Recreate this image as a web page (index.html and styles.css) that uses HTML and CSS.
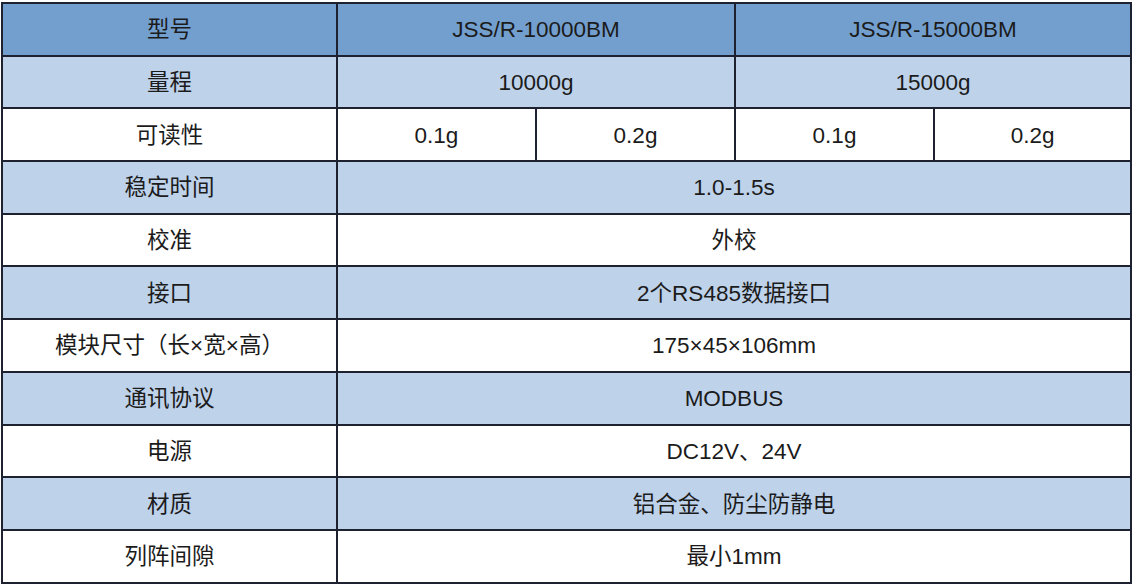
FILE: index.html
```html
<!DOCTYPE html>
<html lang="zh-CN">
<head>
<meta charset="utf-8">
<title>规格参数</title>
<link rel="stylesheet" href="styles.css">
</head>
<body>
<table class="spec">
  <colgroup>
    <col class="c-label">
    <col class="c-val">
    <col class="c-val">
    <col class="c-val">
    <col class="c-last">
  </colgroup>
  <tr class="head">
    <td>型号</td>
    <td colspan="2">JSS/R-10000BM</td>
    <td colspan="2">JSS/R-15000BM</td>
  </tr>
  <tr class="alt">
    <td>量程</td>
    <td colspan="2">10000g</td>
    <td colspan="2">15000g</td>
  </tr>
  <tr>
    <td>可读性</td>
    <td>0.1g</td>
    <td>0.2g</td>
    <td>0.1g</td>
    <td>0.2g</td>
  </tr>
  <tr class="alt">
    <td>稳定时间</td>
    <td colspan="4">1.0-1.5s</td>
  </tr>
  <tr>
    <td>校准</td>
    <td colspan="4">外校</td>
  </tr>
  <tr class="alt">
    <td>接口</td>
    <td colspan="4">2个RS485数据接口</td>
  </tr>
  <tr>
    <td>模块尺寸（长×宽×高）</td>
    <td colspan="4">175×45×106mm</td>
  </tr>
  <tr class="alt">
    <td>通讯协议</td>
    <td colspan="4">MODBUS</td>
  </tr>
  <tr>
    <td>电源</td>
    <td colspan="4">DC12V、24V</td>
  </tr>
  <tr class="alt">
    <td>材质</td>
    <td colspan="4">铝合金、防尘防静电</td>
  </tr>
  <tr>
    <td>列阵间隙</td>
    <td colspan="4">最小1mm</td>
  </tr>
</table>
</body>
</html>
```

FILE: styles.css
```css
html, body {
  margin: 0;
  padding: 0;
  background: #ffffff;
}

body {
  padding: 2px 0 0 1px;
  font-family: "Liberation Sans", "Noto Sans CJK SC", sans-serif;
  color: #1b1b1b;
}

.spec {
  width: 1129px;
  border-collapse: collapse;
  table-layout: fixed;
  border: 2px solid #1e2230;
}

.c-label { width: 335px; }
.c-val { width: 199px; }
.c-last { width: 197px; }

.spec td {
  border: 2px solid #1e2230;
  height: 48.7px;
  padding: 2px 0 0;
  text-align: center;
  vertical-align: middle;
  font-size: 22.5px;
  line-height: 24px;
  background: #ffffff;
}

.spec tr.head td {
  background: #739fcf;
}

.spec tr.alt td {
  background: #bed2ea;
}
```
